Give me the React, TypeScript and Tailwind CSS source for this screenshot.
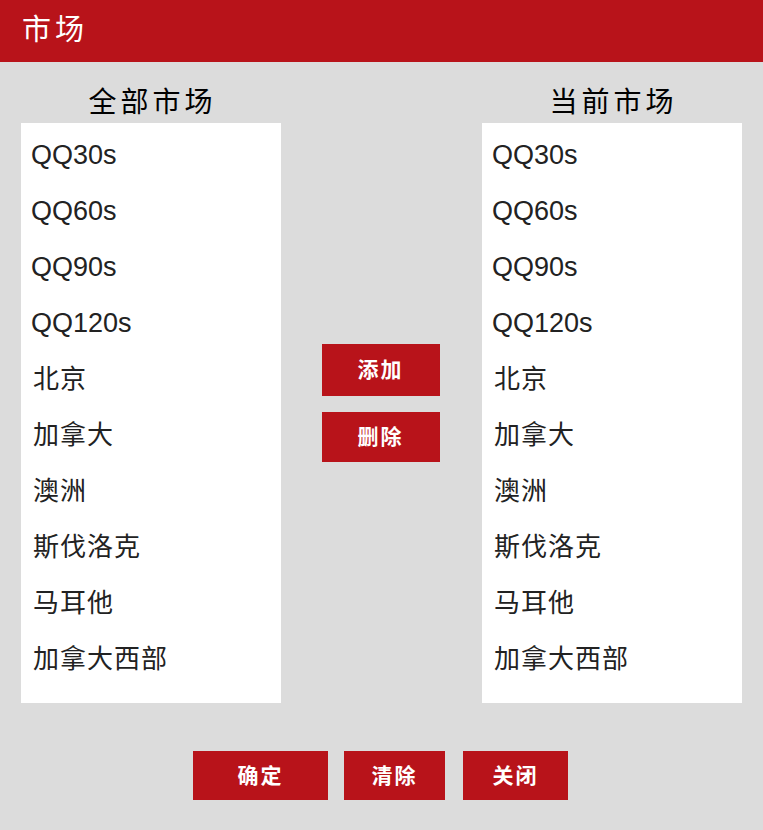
import React from "react";

const items = ["QQ30s", "QQ60s", "QQ90s", "QQ120s", "北京", "加拿大", "澳洲", "斯伐洛克", "马耳他", "加拿大西部"];

function List({ title }: { title: string }) {
  return (
    <div className="flex w-[260px] flex-col">
      <div className="h-[41px] pl-[3px] text-center text-[28px] leading-[41px] tracking-[4px] text-black">{title}</div>
      <div className="h-[580px] bg-white pt-[4px]">
        {items.map((it, i) => (
          <div
            key={it}
            className={
              i < 4
                ? "flex h-[56px] items-center pl-[10px] text-[27px] text-[#222]"
                : "flex h-[56px] items-center pl-[12px] text-[26px] tracking-[1px] text-[#222]"
            }
          >
            {it}
          </div>
        ))}
      </div>
    </div>
  );
}

export default function App() {
  return (
    <div
      className="min-h-[830px] w-full bg-[#dcdcdc]"
      style={{ fontFamily: '"Liberation Sans", "Noto Sans CJK SC", sans-serif' }}
    >
      <div className="flex h-[62px] items-center bg-[#b8131a] pl-[22px] text-[29px] tracking-[4px] text-white">
        市场
      </div>
      <div className="mt-[20px] flex justify-between px-[21px]">
        <List title="全部市场" />
        <div className="mr-[2px] flex flex-col items-center pt-[262px]">
          <button className="h-[52px] w-[118px] bg-[#b8131a] text-[21px] font-bold tracking-[2px] text-white">
            添加
          </button>
          <button className="mt-[16px] h-[50px] w-[118px] bg-[#b8131a] text-[21px] font-bold tracking-[2px] text-white">
            删除
          </button>
        </div>
        <List title="当前市场" />
      </div>
      <div className="mt-[48px] flex justify-center pr-[2px]">
        <button className="h-[49px] w-[135px] bg-[#b8131a] text-[21px] font-bold tracking-[2px] text-white">确定</button>
        <button className="ml-[16px] h-[49px] w-[101px] bg-[#b8131a] text-[21px] font-bold tracking-[2px] text-white">清除</button>
        <button className="ml-[18px] h-[49px] w-[105px] bg-[#b8131a] text-[21px] font-bold tracking-[2px] text-white">关闭</button>
      </div>
    </div>
  );
}
